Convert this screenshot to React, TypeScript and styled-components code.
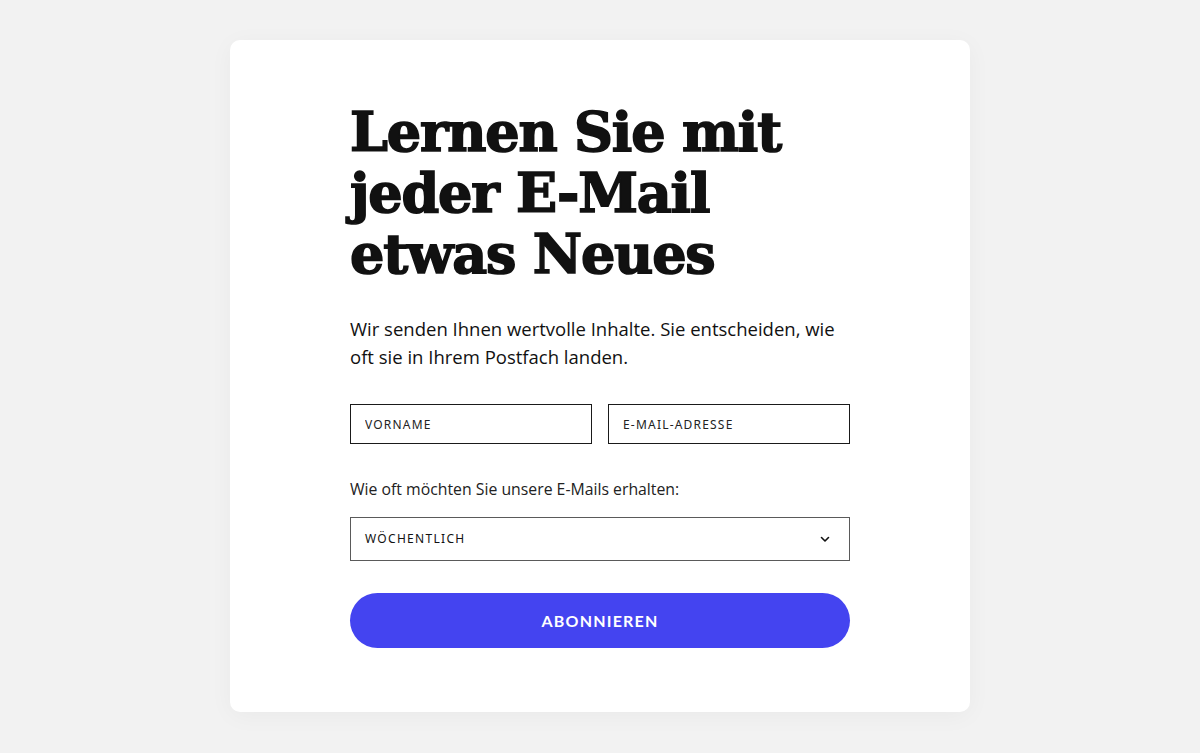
import styled, { createGlobalStyle } from "styled-components";

const GlobalStyle = createGlobalStyle`
  html, body {
    margin: 0;
    padding: 0;
    background: #f2f2f2;
  }
  * {
    box-sizing: border-box;
  }
`;

const Page = styled.div`
  min-height: 753px;
  display: flex;
  justify-content: center;
  padding-top: 40px;
`;

const Card = styled.div`
  width: 740px;
  height: 672px;
  background: #ffffff;
  border-radius: 10px;
  box-shadow: 0 4px 24px rgba(0, 0, 0, 0.04);
  padding: 62px 120px 64px;
  display: flex;
  flex-direction: column;
`;

const Title = styled.h1`
  margin: 0;
  font-family: "DejaVu Serif", serif;
  font-weight: 900;
  font-size: 54px;
  line-height: 61px;
  letter-spacing: -1.2px;
  -webkit-text-stroke: 1.6px #111111;
  color: #111111;
`;

const Intro = styled.p`
  margin: 30px 0 0;
  font-family: "Open Sans", "Noto Sans", sans-serif;
  font-size: 18.5px;
  line-height: 28px;
  color: #111111;
`;

const FieldRow = styled.div`
  display: grid;
  grid-template-columns: 1fr 1fr;
  gap: 16px;
  margin-top: 33px;
`;

const TextInput = styled.input`
  height: 40px;
  width: 100%;
  border: 1px solid #1a1a1a;
  border-radius: 0;
  padding: 0 14px;
  font-family: "Noto Sans", sans-serif;
  font-size: 12px;
  letter-spacing: 1.2px;
  text-transform: uppercase;
  color: #111;
  outline: none;
  &::placeholder {
    color: #222;
  }
`;

const Label = styled.label`
  display: block;
  margin-top: 34px;
  font-family: "Open Sans", "Noto Sans", sans-serif;
  font-size: 15.8px;
  line-height: 22px;
  color: #222;
`;

const SelectBox = styled.div`
  margin-top: 17px;
  height: 44px;
  border: 1px solid #5a5a5a;
  display: flex;
  align-items: center;
  padding: 0 14px;
`;

const SelectValue = styled.span`
  flex: 1;
  font-family: "Noto Sans", sans-serif;
  font-size: 12px;
  letter-spacing: 1.3px;
  color: #111;
`;

const Chevron = styled.svg`
  width: 12px;
  height: 12px;
  margin-right: 4px;
`;

const SubmitButton = styled.button`
  margin-top: 32px;
  height: 56px;
  width: 100%;
  border: none;
  border-radius: 28px;
  background: #4444f0;
  color: #ffffff;
  font-family: Lato, "Noto Sans", sans-serif;
  font-weight: 700;
  font-size: 16px;
  letter-spacing: 1.2px;
  cursor: pointer;
`;

export default function App() {
  return (
    <>
      <GlobalStyle />
      <Page>
        <Card>
          <Title>
            Lernen Sie mit
            <br />
            jeder E-Mail
            <br />
            etwas Neues
          </Title>
          <Intro>
            Wir senden Ihnen wertvolle Inhalte. Sie entscheiden, wie oft sie in
            Ihrem Postfach landen.
          </Intro>
          <FieldRow>
            <TextInput placeholder="Vorname" />
            <TextInput placeholder="E-Mail-Adresse" />
          </FieldRow>
          <Label>Wie oft möchten Sie unsere E-Mails erhalten:</Label>
          <SelectBox>
            <SelectValue>WÖCHENTLICH</SelectValue>
            <Chevron viewBox="0 0 12 12">
              <path
                d="M2.5 4.5 L6 8 L9.5 4.5"
                fill="none"
                stroke="#111"
                strokeWidth="1.6"
                strokeLinecap="round"
                strokeLinejoin="round"
              />
            </Chevron>
          </SelectBox>
          <SubmitButton>ABONNIEREN</SubmitButton>
        </Card>
      </Page>
    </>
  );
}
